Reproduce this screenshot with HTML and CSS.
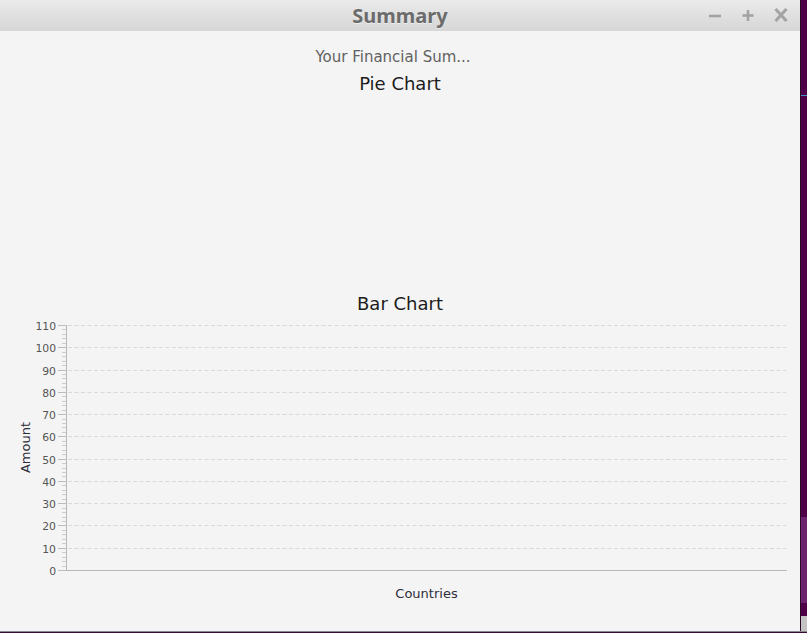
FILE: index.html
```html
<!DOCTYPE html>
<html>
<head>
<meta charset="utf-8">
<link rel="stylesheet" href="styles.css">
</head>
<body>
<div class="screen">
  <div class="row">
    <div class="window">
      <div class="titlebar">
        <div class="tb-spacer"></div>
        <div class="title">Summary</div>
        <div class="controls">
          <span class="ctl"><svg width="16" height="16" viewBox="0 0 16 16"><line x1="2" y1="9" x2="14" y2="9" class="ico"/></svg></span>
          <span class="ctl"><svg width="16" height="16" viewBox="0 0 16 16"><line x1="2.5" y1="8.5" x2="13.5" y2="8.5" class="ico"/><line x1="8" y1="3" x2="8" y2="14" class="ico"/></svg></span>
          <span class="ctl"><svg width="16" height="16" viewBox="0 0 16 16"><line x1="2.5" y1="2" x2="13.5" y2="14" class="ico x"/><line x1="13.5" y1="2" x2="2.5" y2="14" class="ico x"/></svg></span>
        </div>
      </div>
      <div class="content">
        <div class="subtitle">Your Financial Sum...</div>
        <div class="chart-title pie-title">Pie Chart</div>
        <div class="pie-area"></div>
        <div class="chart-title">Bar Chart</div>
        <svg class="bar-chart" width="800" height="300" viewBox="0 0 800 300">
          <g class="grid">
            <line x1="68" y1="10.5" x2="786" y2="10.5"/>
            <line x1="68" y1="32.5" x2="786" y2="32.5"/>
            <line x1="68" y1="55.5" x2="786" y2="55.5"/>
            <line x1="68" y1="77.5" x2="786" y2="77.5"/>
            <line x1="68" y1="99.5" x2="786" y2="99.5"/>
            <line x1="68" y1="121.5" x2="786" y2="121.5"/>
            <line x1="68" y1="144.5" x2="786" y2="144.5"/>
            <line x1="68" y1="166.5" x2="786" y2="166.5"/>
            <line x1="68" y1="188.5" x2="786" y2="188.5"/>
            <line x1="68" y1="210.5" x2="786" y2="210.5"/>
            <line x1="68" y1="233.5" x2="786" y2="233.5"/>
          </g>
          <g class="minor" id="minor"></g>
          <g class="major">
            <line x1="58" y1="10.5" x2="66" y2="10.5"/>
            <line x1="58" y1="32.5" x2="66" y2="32.5"/>
            <line x1="58" y1="55.5" x2="66" y2="55.5"/>
            <line x1="58" y1="77.5" x2="66" y2="77.5"/>
            <line x1="58" y1="99.5" x2="66" y2="99.5"/>
            <line x1="58" y1="121.5" x2="66" y2="121.5"/>
            <line x1="58" y1="144.5" x2="66" y2="144.5"/>
            <line x1="58" y1="166.5" x2="66" y2="166.5"/>
            <line x1="58" y1="188.5" x2="66" y2="188.5"/>
            <line x1="58" y1="210.5" x2="66" y2="210.5"/>
            <line x1="58" y1="233.5" x2="66" y2="233.5"/>
            <line x1="58" y1="255.5" x2="66" y2="255.5"/>
          </g>
          <g class="axis">
            <line x1="66.5" y1="10" x2="66.5" y2="256"/>
            <line x1="66" y1="255.5" x2="787" y2="255.5"/>
          </g>
          <g class="ticklabels">
            <text x="56" y="14.5">110</text>
            <text x="56" y="36.5">100</text>
            <text x="56" y="59.5">90</text>
            <text x="56" y="81.5">80</text>
            <text x="56" y="103.5">70</text>
            <text x="56" y="125.5">60</text>
            <text x="56" y="148.5">50</text>
            <text x="56" y="170.5">40</text>
            <text x="56" y="192.5">30</text>
            <text x="56" y="214.5">20</text>
            <text x="56" y="237.5">10</text>
            <text x="56" y="259.5">0</text>
          </g>
          <text class="axis-label" transform="translate(29.5 132.5) rotate(-90)">Amount</text>
          <text class="axis-label" x="426.5" y="282.5">Countries</text>
        </svg>
      </div>
    </div>
    <div class="desk-strip">
      <div class="d1"></div>
      <div class="d-blue"></div>
      <div class="d2"></div>
      <div class="d-light"></div>
      <div class="d3"></div>
      <div class="d-gray"></div>
    </div>
  </div>
  <div class="bottom-line"></div>
  <div class="bottom-desk"></div>
</div>
<script>
  (function () {
    var g = document.getElementById('minor');
    var ns = 'http://www.w3.org/2000/svg';
    var step = 245 / 11;
    for (var i = 0; i < 11; i++) {
      for (var k = 1; k < 5; k++) {
        var y = Math.round(10 + i * step + k * step / 5) + 0.5;
        var l = document.createElementNS(ns, 'line');
        l.setAttribute('x1', '62');
        l.setAttribute('x2', '66');
        l.setAttribute('y1', y);
        l.setAttribute('y2', y);
        g.appendChild(l);
      }
    }
  })();
</script>
</body>
</html>
```

FILE: styles.css
```css
html, body {
  margin: 0;
  padding: 0;
}
body {
  width: 807px;
  height: 633px;
  overflow: hidden;
  background: #4b0044;
}
.screen {
  display: flex;
  flex-direction: column;
  width: 807px;
  height: 633px;
}
.row {
  display: flex;
  height: 631px;
  flex: none;
}
.window {
  width: 800px;
  height: 631px;
  flex: none;
  background: #f4f4f4;
  display: flex;
  flex-direction: column;
}
.titlebar {
  height: 31px;
  flex: none;
  display: grid;
  grid-template-columns: 1fr auto 1fr;
  align-items: center;
  background: linear-gradient(to bottom, #ebebeb 0%, #e0e0e0 50%, #d6d6d6 100%);
}
.title {
  font-family: "Noto Sans", "Open Sans", sans-serif;
  font-weight: bold;
  font-size: 20px;
  color: #6b6b6b;
  line-height: 31px;
  text-shadow: 0 1px 0 rgba(255,255,255,0.5);
}
.controls {
  display: flex;
  justify-content: flex-end;
  padding-right: 3px;
}
.ctl {
  width: 33px;
  height: 31px;
  display: flex;
  align-items: center;
  justify-content: center;
}
.ctl svg {
  display: block;
  margin-top: -2px;
}
.ico {
  stroke: #a3a3a3;
  stroke-width: 2.6;
  stroke-linecap: butt;
}
.ico.x {
  stroke-width: 3;
}
.content {
  flex: 1;
  display: flex;
  flex-direction: column;
  font-family: "DejaVu Sans", sans-serif;
}
.subtitle {
  margin-top: 17px;
  height: 18px;
  line-height: 18px;
  font-size: 15px;
  color: #616161;
  text-align: center;
  padding-right: 14px;
}
.chart-title {
  height: 22px;
  line-height: 22px;
  font-size: 18px;
  color: #1c1c1c;
  text-align: center;
}
.pie-title {
  margin-top: 7px;
}
.pie-area {
  height: 198px;
}
.bar-chart {
  display: block;
}
.grid line {
  stroke: #d9d9d9;
  stroke-width: 1;
  stroke-dasharray: 4 2.5;
}
.minor line {
  stroke: #cdcdcd;
  stroke-width: 1;
}
.major line {
  stroke: #bdbdbd;
  stroke-width: 1;
}
.axis line {
  stroke: #b8b8b8;
  stroke-width: 1;
}
.ticklabels text {
  font-family: "DejaVu Sans", sans-serif;
  font-size: 10.8px;
  fill: #555555;
  text-anchor: end;
}
.axis-label {
  font-family: "DejaVu Sans", sans-serif;
  font-size: 13px;
  fill: #2e2e3a;
  text-anchor: middle;
}
.desk-strip {
  width: 7px;
  flex: none;
  display: flex;
  flex-direction: column;
  border-left: 1px solid #2a0a26;
  box-sizing: border-box;
  background: #4d0047;
}
.desk-strip div { flex: none; }
.d1 { height: 95px; background: #4d0047; }
.d-blue { height: 1px; background: #3c8fc4; }
.d2 { height: 421px; background: #4d0047; }
.d-light { height: 86px; background: #6c226c; }
.d3 { height: 13px; background: #4d0047; }
.desk-strip .d-gray { flex: 1; background: #c4c4c4; }
.bottom-line {
  height: 1px;
  flex: none;
  background: #8a8790;
}
.bottom-desk {
  height: 1px;
  flex: none;
  background: #3a0a34;
}
```
